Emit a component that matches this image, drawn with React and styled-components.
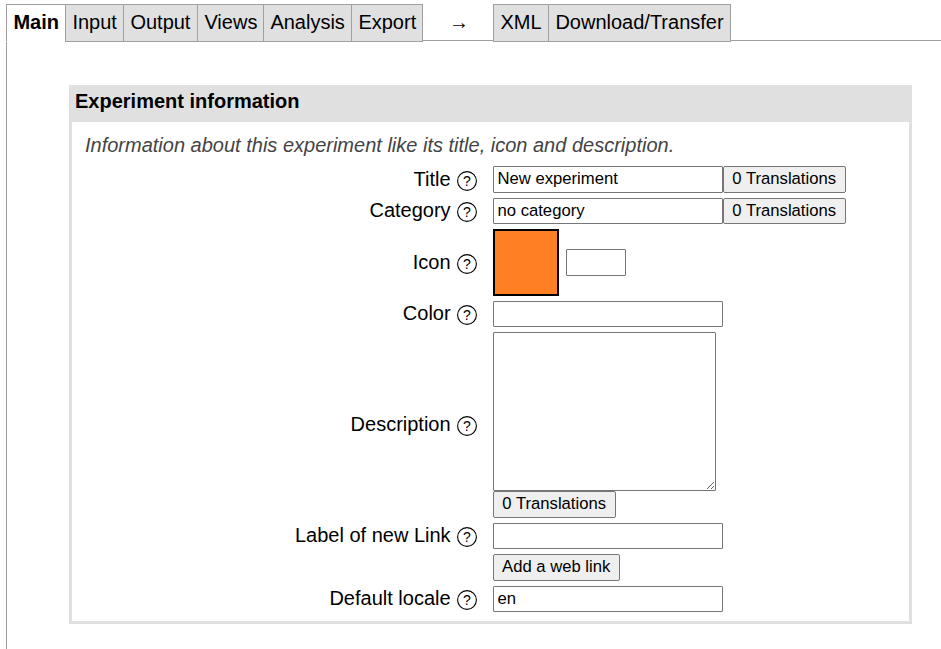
import React from "react";
import styled, { createGlobalStyle } from "styled-components";

const GlobalStyle = createGlobalStyle`
  *, *::before, *::after { box-sizing: border-box; }
  html { background: #fff; }
  body {
    margin: 0;
    overflow: hidden;
    background: #fff;
    color: #000;
    font: 20px/23px "Liberation Sans", Arial, sans-serif;
  }
`;

const Page = styled.div`
  display: flex;
  flex-direction: column;
  height: 649px;
  padding: 4px 0 0 6px;
`;

const TabBar = styled.nav`
  display: flex;
  height: 38px;
  z-index: 1;
`;

const Tab = styled.a`
  width: ${(p) => p.$width}px;
  padding: 6px 0 0 6.4px;
  border: 1px solid #a0a0a0;
  border-right-width: ${(p) => (p.$last ? 1 : 0)}px;
  background: #e0e0e0;
  white-space: nowrap;
`;

const ActiveTab = styled(Tab)`
  border-bottom-color: #fff;
  background: #fff;
  font-weight: bold;
`;

const Arrow = styled.span`
  width: 70px;
  padding: 7px 0 0 2px;
  text-align: center;
`;

const Content = styled.main`
  flex: 1;
  margin-top: -2px;
  padding: 44px 0 0 62px;
  border: solid #a0a0a0;
  border-width: 1px 0 0 1px;
`;

const Panel = styled.section`
  width: 843px;
  height: 539px;
  border: 3px solid #e0e0e0;
  border-top: 0;
`;

const PanelTitle = styled.h2`
  height: 37px;
  margin: 0;
  padding: 5px 3px;
  background: #e0e0e0;
  font-size: 20px;
  line-height: 23px;
`;

const Intro = styled.p`
  height: 44px;
  margin: 0;
  padding: 12px 13px 0;
  color: #444;
  font-style: italic;
`;

const Row = styled.div`
  display: grid;
  grid-template-columns: 405px 1fr;
  column-gap: 16px;
  height: ${(p) => p.$height}px;
`;

const Label = styled.label`
  display: flex;
  justify-content: flex-end;
  gap: 6.4px;
  height: 24px;
  margin-top: ${(p) => p.$top}px;
`;

const HelpIcon = styled.svg`
  width: 20px;
  height: 20px;
  margin-top: 3px;
`;

const Controls = styled.div`
  display: flex;
  align-items: flex-start;
  flex-direction: ${(p) => (p.$stacked ? "column" : "row")};
`;

const TextInput = styled.input`
  width: ${(p) => p.$width || 230}px;
  height: ${(p) => p.$height || 26}px;
  margin: ${(p) => p.$margin || 0};
  padding: 0 3.5px 1px;
  border: 1px solid #767676;
  border-radius: 1px;
  outline: 0;
  background: #fff;
  color: #000;
  font: 16.6667px "Liberation Sans", Arial, sans-serif;
`;

const TextArea = styled.textarea`
  display: block;
  width: 223px;
  height: 159px;
  margin: 0;
  border: 1px solid #767676;
  border-radius: 1px;
  outline: 0;
  resize: both;
  background: #fff;
`;

const Button = styled.button`
  width: ${(p) => p.$width || 123}px;
  height: ${(p) => p.$height || 27}px;
  padding: 0 0.6px ${(p) => (p.$height === 26 ? 1 : 2)}px 0;
  border: 1px solid #767676;
  border-radius: 2px;
  background: #efefef;
  color: #000;
  font: 16.6667px "Liberation Sans", Arial, sans-serif;
  white-space: nowrap;
`;

const ColorSwatch = styled.div`
  width: 66px;
  height: 67px;
  border: 2px solid #000;
  background: #ff7f24;
`;

const HelpMark = () => (
  <HelpIcon viewBox="0 0 20 20">
    <circle cx="10" cy="10" r="9.4" fill="none" stroke="#000" strokeWidth="1.1" />
    <text x="9.8" y="15" textAnchor="middle" fontSize="14">?</text>
  </HelpIcon>
);

const Field = ({ label, height, top = 1, stacked, children }) => (
  <Row $height={height}>
    {label ? (
      <Label $top={top}>
        <span>{label}</span>
        <HelpMark />
      </Label>
    ) : (
      <span />
    )}
    <Controls $stacked={stacked}>{children}</Controls>
  </Row>
);

export default function App() {
  return (
    <>
      <GlobalStyle />
      <Page>
        <TabBar>
          <ActiveTab $width={59}>Main</ActiveTab>
          <Tab $width={58}>Input</Tab>
          <Tab $width={74}>Output</Tab>
          <Tab $width={66}>Views</Tab>
          <Tab $width={88}>Analysis</Tab>
          <Tab $width={72} $last>Export</Tab>
          <Arrow>→</Arrow>
          <Tab $width={55}>XML</Tab>
          <Tab $width={183} $last>Download/Transfer</Tab>
        </TabBar>
        <Content>
          <Panel>
            <PanelTitle>Experiment information</PanelTitle>
            <Intro>Information about this experiment like its title, icon and description.</Intro>
            <Field label="Title" height={32} top={2}>
              <TextInput $height={27} defaultValue="New experiment" />
              <Button>0 Translations</Button>
            </Field>
            <Field label="Category" height={31}>
              <TextInput defaultValue="no category" />
              <Button $height={26}>0 Translations</Button>
            </Field>
            <Field label="Icon" height={72} top={22}>
              <ColorSwatch />
              <TextInput $width={60} $height={27} $margin="20px 0 0 7px" />
            </Field>
            <Field label="Color" height={31}>
              <TextInput />
            </Field>
            <Field label="Description" height={191} top={81} stacked>
              <TextArea />
              <Button>0 Translations</Button>
            </Field>
            <Field label="Label of new Link" height={31}>
              <TextInput />
            </Field>
            <Field height={32}>
              <Button $width={127}>Add a web link</Button>
            </Field>
            <Field label="Default locale" height={26}>
              <TextInput defaultValue="en" />
            </Field>
          </Panel>
        </Content>
      </Page>
    </>
  );
}
